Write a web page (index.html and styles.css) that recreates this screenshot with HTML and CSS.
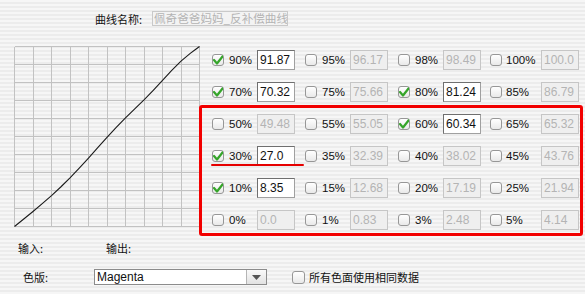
FILE: index.html
```html
<!DOCTYPE html>
<html lang="zh">
<head>
    <meta charset="UTF-8">
    <title>曲线</title>
    <link rel="stylesheet" href="styles.css">
</head>
<body>
    <div id="panel">
        <!-- 曲线名称 -->
        <div class="name-row">
            <span class="name-label">曲线名称:</span>
            <div class="name-input">佩奇爸爸妈妈_反补偿曲线</div>
        </div>

        <div class="main">
            <!-- 曲线图 -->
            <svg class="graph" width="186" height="181" viewBox="-0.5 -0.5 186 181">
                <g stroke="#c2c2c2" stroke-width="1" shape-rendering="crispEdges">
                    <path d="M0 0V180M19 0V180M37 0V180M56 0V180M74 0V180M93 0V180M111 0V180M130 0V180M148 0V180M167 0V180M185 0V180"/>
                    <path d="M0 0H185M0 18H185M0 36H185M0 54H185M0 72H185M0 90H185M0 108H185M0 126H185M0 144H185M0 162H185M0 180H185"/>
                </g>
                <polyline fill="none" stroke="#1a1a1a" stroke-width="1.1"
                    points="0,180 1.85,178.5 5.55,175.5 9.25,172.5 18.5,165 27.75,157.2 37,149.1 46.25,140.5 55.5,131.4 64.75,121.7 74,111.6 83.25,101.2 92.5,90.9 101.75,80.9 111,71.4 120.25,62.4 129.5,53.4 138.75,43.8 148,33.8 157.25,23.8 166.5,14.6 175.75,6.9 181.3,2.7 185,0"/>
            </svg>

            <!-- 节点 -->
            <div class="points">
                <div class="cell"><span class="cb on"></span><span class="pct">90%</span><span class="val">91.87</span></div>
                <div class="cell"><span class="cb"></span><span class="pct">95%</span><span class="val off">96.17</span></div>
                <div class="cell"><span class="cb"></span><span class="pct">98%</span><span class="val off">98.49</span></div>
                <div class="cell last"><span class="cb"></span><span class="pct">100%</span><span class="val off">100.0</span></div>

                <div class="cell"><span class="cb on"></span><span class="pct">70%</span><span class="val">70.32</span></div>
                <div class="cell"><span class="cb"></span><span class="pct">75%</span><span class="val off">75.66</span></div>
                <div class="cell"><span class="cb on"></span><span class="pct">80%</span><span class="val">81.24</span></div>
                <div class="cell last"><span class="cb"></span><span class="pct">85%</span><span class="val off">86.79</span></div>

                <div class="cell"><span class="cb"></span><span class="pct">50%</span><span class="val off">49.48</span></div>
                <div class="cell"><span class="cb"></span><span class="pct">55%</span><span class="val off">55.05</span></div>
                <div class="cell"><span class="cb on"></span><span class="pct">60%</span><span class="val">60.34</span></div>
                <div class="cell last"><span class="cb"></span><span class="pct">65%</span><span class="val off">65.32</span></div>

                <div class="cell"><span class="cb on"></span><span class="pct">30%</span><span class="val">27.0</span></div>
                <div class="cell"><span class="cb"></span><span class="pct">35%</span><span class="val off">32.39</span></div>
                <div class="cell"><span class="cb"></span><span class="pct">40%</span><span class="val off">38.02</span></div>
                <div class="cell last"><span class="cb"></span><span class="pct">45%</span><span class="val off">43.76</span></div>

                <div class="cell"><span class="cb on"></span><span class="pct">10%</span><span class="val">8.35</span></div>
                <div class="cell"><span class="cb"></span><span class="pct">15%</span><span class="val off">12.68</span></div>
                <div class="cell"><span class="cb"></span><span class="pct">20%</span><span class="val off">17.19</span></div>
                <div class="cell last"><span class="cb"></span><span class="pct">25%</span><span class="val off">21.94</span></div>

                <div class="cell"><span class="cb"></span><span class="pct">0%</span><span class="val off">0.0</span></div>
                <div class="cell"><span class="cb"></span><span class="pct">1%</span><span class="val off">0.83</span></div>
                <div class="cell"><span class="cb"></span><span class="pct">3%</span><span class="val off">2.48</span></div>
                <div class="cell last"><span class="cb"></span><span class="pct">5%</span><span class="val off">4.14</span></div>
            </div>
        </div>

        <div class="io-row">
            <span class="io-in">输入:</span>
            <span class="io-out">输出:</span>
        </div>

        <div class="plate-row">
            <span class="plate-label">色版:</span>
            <div class="select">
                <span class="select-text">Magenta</span>
                <span class="select-btn"><svg width="9" height="5" viewBox="0 0 9 5"><path d="M0 0H9L4.5 5Z" fill="#555"/></svg></span>
            </div>
            <span class="cb same"></span>
            <span class="same-label">所有色面使用相同数据</span>
        </div>

        <!-- 标注 -->
        <div class="mark-box"></div>
        <div class="mark-line"></div>
    </div>
</body>
</html>
```

FILE: styles.css
```css
body {
    margin: 0;
    font-family: "Liberation Sans", Arial, "Noto Sans CJK SC", sans-serif;
    color: #111;
}

#panel {
    position: relative;
    width: 585px;
    height: 294px;
    overflow: hidden;
    background: repeating-linear-gradient(to bottom, #f6f6f6 0, #f6f6f6 2px, #ececec 2px, #ececec 4px);
}

.name-row {
    display: flex;
    align-items: center;
    height: 15px;
    padding-top: 11px;
    padding-left: 95px;
}

.name-label {
    font-family: "Noto Sans CJK SC", sans-serif;
    font-size: 11px;
    width: 57px;
}

.name-input {
    width: 136px;
    height: 15px;
    box-sizing: border-box;
    border: 1px solid #c9c9c9;
    background: #f3f3f3;
    color: #b3b3b3;
    font-family: "Noto Sans CJK SC", sans-serif;
    font-size: 11.6px;
    line-height: 13px;
    padding-left: 1px;
    white-space: nowrap;
    overflow: hidden;
}

.main {
    display: flex;
    align-items: flex-start;
    margin-top: 20px;
}

.graph {
    display: block;
    margin-left: 14px;
    flex: none;
}

.points {
    display: grid;
    grid-template-columns: 93px 93px 92px 90px;
    grid-auto-rows: 20px;
    row-gap: 12px;
    margin-top: 4px;
    margin-left: 12px;
}

.cell {
    display: flex;
    align-items: center;
}

.cb {
    flex: none;
    width: 12px;
    height: 12px;
    box-sizing: border-box;
    border: 1px solid #979797;
    border-radius: 3px;
    background: linear-gradient(#ffffff, #e9e9e9);
    position: relative;
}

.cb.on::after {
    content: "";
    position: absolute;
    left: 0;
    top: 0;
    width: 10px;
    height: 10px;
    background: url("data:image/svg+xml;utf8,<svg xmlns='http://www.w3.org/2000/svg' width='10' height='10' viewBox='0 0 10 10'><path d='M1 5 L4 8.5 L9.5 1.5' fill='none' stroke='%2335a52a' stroke-width='2.2' stroke-linecap='round' stroke-linejoin='round'/></svg>") no-repeat;
}

.pct {
    width: 28px;
    margin-left: 5px;
    font-size: 11.5px;
}

.cell.last .pct {
    width: 35px;
    margin-left: 4px;
}

.val {
    width: 38px;
    height: 20px;
    box-sizing: border-box;
    border: 1px solid #6f6f6f;
    border-bottom-color: #a0a0a0;
    border-right-color: #a0a0a0;
    background: #fff;
    font-size: 12px;
    line-height: 18px;
    padding-left: 2px;
    white-space: nowrap;
    overflow: hidden;
}

.val.off {
    border-color: #c6c6c6;
    background: #efefef;
    color: #b4b4b4;
}

.io-row {
    display: flex;
    align-items: center;
    height: 14px;
    margin-top: 11px;
    padding-left: 18px;
    font-family: "Noto Sans CJK SC", sans-serif;
    font-size: 11px;
}

.io-in {
    width: 88px;
}

.plate-row {
    display: flex;
    align-items: center;
    height: 16px;
    margin-top: 14px;
    padding-left: 23px;
}

.plate-label {
    width: 71px;
    font-family: "Noto Sans CJK SC", sans-serif;
    font-size: 11px;
}

.select {
    display: flex;
    width: 173px;
    height: 16px;
    box-sizing: border-box;
    border: 1px solid #8c8c8c;
    background: #fff;
}

.select-text {
    flex: 1;
    font-size: 12px;
    line-height: 14px;
    padding-left: 2px;
}

.select-btn {
    width: 19px;
    display: flex;
    align-items: center;
    justify-content: center;
    border-left: 1px solid #b5b5b5;
    background: linear-gradient(#fafafa, #e2e2e2);
}

.cb.same {
    width: 13px;
    height: 13px;
    margin-left: 25px;
}

.same-label {
    margin-left: 4px;
    font-family: "Noto Sans CJK SC", sans-serif;
    font-size: 11px;
}

.mark-box {
    position: absolute;
    left: 199px;
    top: 105px;
    width: 378px;
    height: 125px;
    border: 3px solid #f20000;
    border-radius: 3px;
}

.mark-line {
    position: absolute;
    left: 211px;
    top: 164px;
    width: 93px;
    height: 2px;
    border-radius: 1px;
    background: #e60000;
}
```
